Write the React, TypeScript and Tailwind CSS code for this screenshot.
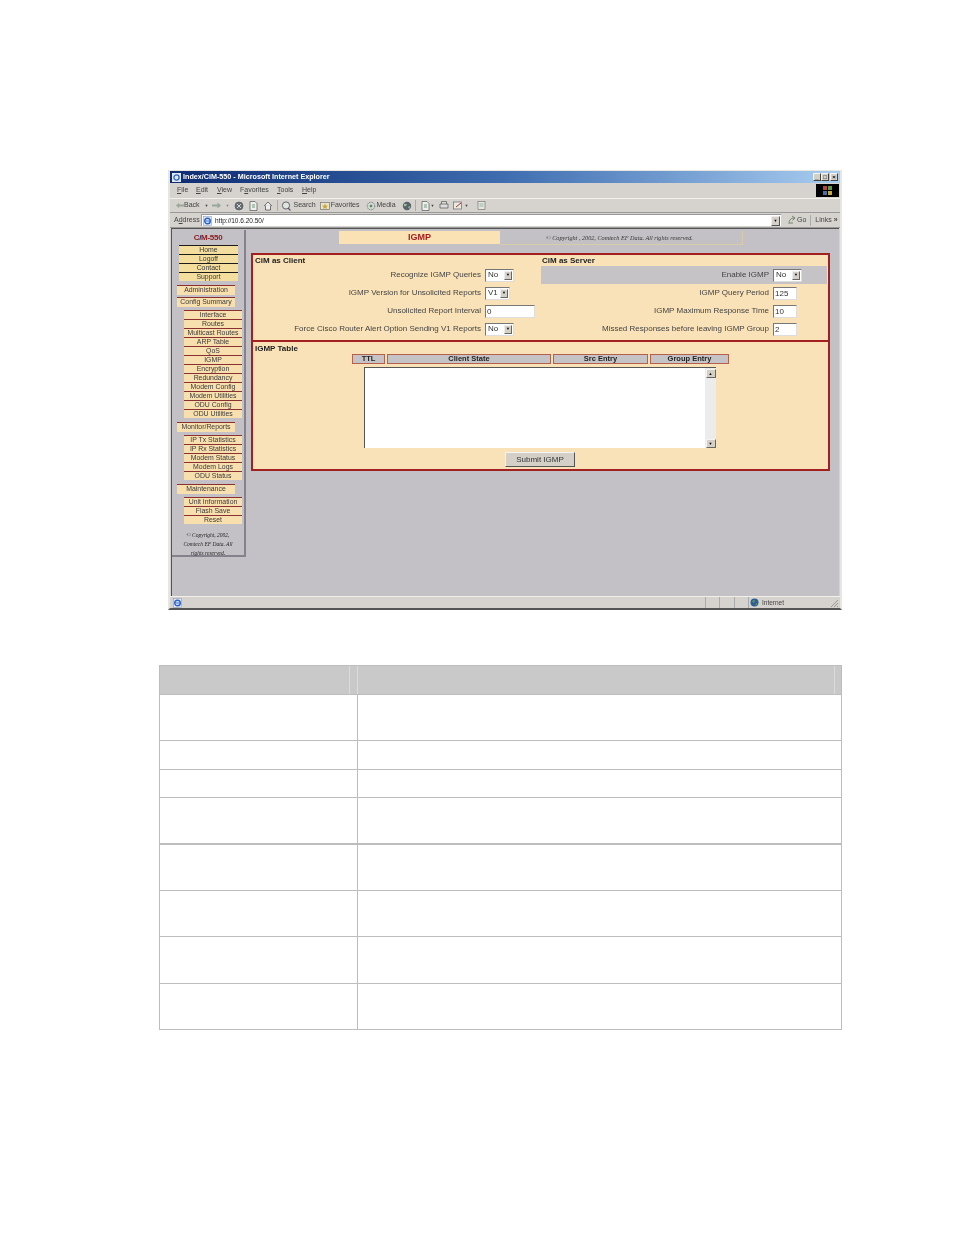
const font = { fontFamily: '"Liberation Sans", Arial, sans-serif' }

const primary = ['Home', 'Logoff', 'Contact', 'Support']
const config = ['Interface', 'Routes', 'Multicast Routes', 'ARP Table', 'QoS', 'IGMP', 'Encryption', 'Redundancy', 'Modem Config', 'Modem Utilities', 'ODU Config', 'ODU Utilities']
const monitor = ['IP Tx Statistics', 'IP Rx Statistics', 'Modem Status', 'Modem Logs', 'ODU Status']
const maintenance = ['Unit Information', 'Flash Save', 'Reset']

function NavLink({ label, dark, className = '' }: { label: string; dark?: boolean; className?: string }) {
  return (
    <div className={`h-[9px] border-t-[1px] text-center text-[6.9px] leading-[8px] text-[#3a3a3a] whitespace-nowrap overflow-hidden ${dark ? 'border-[#1c1c1c] bg-[#f4de9e]' : 'border-[#8a3030] bg-[#f8dfae]'} ${className}`}>
      {label}
    </div>
  )
}

function NavGroup({ items, mt }: { items: string[]; mt: string }) {
  return (
    <div className={`ml-[12px] w-[58px] ${mt}`}>
      {items.map(i => <NavLink key={i} label={i} />)}
    </div>
  )
}

function Sidebar() {
  return (
    <div className="w-[74px] h-[327px] shrink-0 mt-[1px] bg-[#c4c1c6] border-r-[2px] border-b-[2px] border-[#84828a] pt-[3px]">
      <div className="text-center text-[8px] leading-[10px] font-bold text-[#8c1a1a] tracking-[-0.3px]">C<span className="text-[#27277a]">/</span>M-550</div>
      <div className="ml-[7px] w-[59px] mt-[2px]">
        {primary.map(i => <NavLink key={i} label={i} dark />)}
      </div>
      <div className="ml-[5px] w-[58px] mt-[4px]"><NavLink label="Administration" className="h-[10px]" /></div>
      <div className="ml-[5px] w-[58px] mt-[2px]"><NavLink label="Config Summary" className="h-[10px]" /></div>
      <NavGroup items={config} mt="mt-[3px]" />
      <div className="ml-[5px] w-[58px] mt-[4px]"><NavLink label="Monitor/Reports" className="h-[10px]" /></div>
      <NavGroup items={monitor} mt="mt-[3px]" />
      <div className="ml-[5px] w-[58px] mt-[4px]"><NavLink label="Maintenance" className="h-[10px]" /></div>
      <NavGroup items={maintenance} mt="mt-[3px]" />
      <div className="mt-[7px] text-center italic text-[5.5px] leading-[9px] text-[#222] px-[5px]" style={{ fontFamily: '"Liberation Serif", serif' }}>
        © Copyright, 2002,<br />Comtech EF Data. All<br />rights reserved.
      </div>
    </div>
  )
}

function Select({ value, w }: { value: string; w: string }) {
  return (
    <div className={`${w} h-[13px] bg-white border border-[#777] border-r-[#ddd] border-b-[#ddd] flex items-center justify-between pl-[2px] pr-[1px] text-[8px] text-[#333]`}>
      <span>{value}</span>
      <span className="w-[8px] h-[9px] bg-[#d4d0c8] border border-[#eee] border-r-[#666] border-b-[#666] flex items-center justify-center text-[4px] leading-none text-black">▼</span>
    </div>
  )
}

function TextBox({ value, w }: { value: string; w: string }) {
  return (
    <div className={`${w} h-[13px] bg-white border border-[#777] border-r-[#ddd] border-b-[#ddd] pl-[1px] text-[8px] leading-[11px] text-[#333]`}>{value}</div>
  )
}

function Field({ label, children, gray }: { label: string; children: React.ReactNode; gray?: boolean }) {
  return (
    <div className={`h-[18px] flex items-center ${gray ? 'bg-[#c6c3c6]' : ''}`}>
      <div className="w-[228px] text-right text-[8px] text-[#444] whitespace-nowrap">{label}</div>
      <div className="ml-[4px]">{children}</div>
    </div>
  )
}

function TableHead({ label, w }: { label: string; w: string }) {
  return (
    <div className={`${w} h-[10px] bg-[#c6c3c6] border border-[#b5604c] text-center text-[7.5px] leading-[8px] font-bold text-[#222]`}>{label}</div>
  )
}

function Main() {
  return (
    <div className="flex-1 min-w-0">
      <div className="flex mt-[2px] ml-[93px] h-[14px]">
        <div className="w-[161px] h-[13px] bg-[#fbe2b4] text-center text-[9px] leading-[12px] font-bold text-[#a81c1c]">IGMP</div>
        <div className="w-[243px] h-[14px] border-r border-b border-[#d8cba8] pl-[46px] italic text-[6.2px] leading-[13px] text-[#333]" style={{ fontFamily: '"Liberation Serif", serif' }}>
          © Copyright , 2002, Comtech EF Data. All rights reserved.
        </div>
      </div>
      <div className="ml-[5px] mt-[8px] w-[579px] h-[218px] border-[2px] border-[#a32020] bg-[#f9e2b7]">
        <div className="h-[87px] border-b-[2px] border-[#a32020] flex">
          <div className="w-[288px] shrink-0">
            <div className="pl-[2px] h-[11px] text-[8px] leading-[11px] font-bold text-[#222]">CiM as Client</div>
            <Field label="Recognize IGMP Queries"><Select value="No" w="w-[29px]" /></Field>
            <Field label="IGMP Version for Unsolicited Reports"><Select value="V1" w="w-[25px]" /></Field>
            <Field label="Unsolicited Report Interval"><TextBox value="0" w="w-[50px]" /></Field>
            <Field label="Force Cisco Router Alert Option Sending V1 Reports"><Select value="No" w="w-[29px]" /></Field>
          </div>
          <div className="flex-1 pr-[1px]">
            <div className="pl-[1px] h-[11px] text-[8px] leading-[11px] font-bold text-[#222]">CiM as Server</div>
            <Field label="Enable IGMP" gray><Select value="No" w="w-[29px]" /></Field>
            <Field label="IGMP Query Period"><TextBox value="125" w="w-[24px]" /></Field>
            <Field label="IGMP Maximum Response Time"><TextBox value="10" w="w-[24px]" /></Field>
            <Field label="Missed Responses before leaving IGMP Group"><TextBox value="2" w="w-[24px]" /></Field>
          </div>
        </div>
        <div className="pl-[2px] pt-[1px] h-[12px] text-[8px] leading-[11px] font-bold text-[#222]">IGMP Table</div>
        <div className="flex gap-[2px] ml-[99px]">
          <TableHead label="TTL" w="w-[33px]" />
          <TableHead label="Client State" w="w-[164px]" />
          <TableHead label="Src Entry" w="w-[95px]" />
          <TableHead label="Group Entry" w="w-[79px]" />
        </div>
        <div className="ml-[111px] mt-[3px] w-[352px] h-[81px] bg-white border-l border-t border-[#555] flex justify-end">
          <div className="w-[11px] h-full bg-[#ececec] flex flex-col justify-between items-center pt-[1px]">
            <div className="w-[10px] h-[9px] bg-[#d4d0c8] border border-[#f4f4f4] border-r-[#666] border-b-[#666] text-[4px] leading-[7px] text-center text-black">▲</div>
            <div className="w-[10px] h-[9px] bg-[#d4d0c8] border border-[#f4f4f4] border-r-[#666] border-b-[#666] text-[4px] leading-[7px] text-center text-black">▼</div>
          </div>
        </div>
        <div className="ml-[252px] mt-[4px] w-[70px] h-[15px] bg-[#d4d0c8] border border-[#f4f4f4] border-r-[#555] border-b-[#555] text-center text-[8px] leading-[13px] text-[#333]">Submit IGMP</div>
      </div>
    </div>
  )
}

function Win({ children }: { children: React.ReactNode }) {
  return <span className="w-[8px] h-[8px] bg-[#d4d0c8] border border-[#f4f4f4] border-r-[#444] border-b-[#444] flex items-center justify-center text-[6px] leading-none text-black font-bold">{children}</span>
}

function Dot({ c, ml = 'ml-[8px]' }: { c: string; ml?: string }) {
  return (
    <svg width="10" height="10" viewBox="0 0 10 10" className={ml}>
      <circle cx="5" cy="5" r="4" fill={c} stroke="#555" strokeWidth="0.7" />
      <path d="M3 3 L7 7 M7 3 L3 7" stroke="#eee" strokeWidth="0.8" />
    </svg>
  )
}

function Page({ ml = 'ml-[5px]' }: { ml?: string }) {
  return (
    <svg width="9" height="10" viewBox="0 0 9 10" className={ml}>
      <path d="M1 .5 H6 L8 2.5 V9.5 H1 Z" fill="#eee" stroke="#555" strokeWidth="0.7" />
      <path d="M3 4 H6 M3 6 H6" stroke="#4a8a5a" strokeWidth="0.8" />
    </svg>
  )
}

function Toolbar() {
  return (
    <div className="h-[15px] flex items-center border-t border-[#f2f0ea] border-b border-b-[#999] text-[7px] text-[#444] pl-[6px] whitespace-nowrap">
      <svg width="8" height="7" viewBox="0 0 9 7"><path d="M0 3.5 L3.5 .5 V2.5 H9 V4.5 H3.5 V6.5 Z" fill="#9aa79a" /></svg>
      <span>Back</span>
      <span className="ml-[5px] text-[4px]">▼</span>
      <svg width="9" height="7" viewBox="0 0 9 7" className="ml-[3px]"><path d="M9 3.5 L5.5 .5 V2.5 H0 V4.5 H5.5 V6.5 Z" fill="#9aa79a" /></svg>
      <span className="ml-[5px] text-[4px] text-[#888]">▼</span>
      <Dot c="#66707a" ml="ml-[4px]" />
      <Page />
      <svg width="10" height="10" viewBox="0 0 10 10" className="ml-[5px]"><path d="M1 5 L5 1 L9 5 M2.5 4.5 V9 H7.5 V4.5" fill="#eee" stroke="#555" strokeWidth="0.8" /></svg>
      <span className="ml-[4px] w-px h-[11px] bg-[#aaa]" />
      <svg width="10" height="10" viewBox="0 0 10 10" className="ml-[3px]"><circle cx="5" cy="4.5" r="3.6" fill="#dfe6dc" stroke="#556" strokeWidth="0.9" /><path d="M7 7 L9.5 9.5" stroke="#556" strokeWidth="1.1" /></svg>
      <span className="ml-[3px]">Search</span>
      <svg width="10" height="9" viewBox="0 0 10 9" className="ml-[4px]"><rect x=".5" y="1.5" width="9" height="7" fill="#e9e3c8" stroke="#777" strokeWidth="0.7" /><path d="M5 2.5 L6 4.5 L8 4.7 L6.5 6 L7 8 L5 7 L3 8 L3.5 6 L2 4.7 L4 4.5 Z" fill="#c8a83a" /></svg>
      <span className="ml-[1px]">Favorites</span>
      <svg width="10" height="10" viewBox="0 0 10 10" className="ml-[7px]"><circle cx="5" cy="5" r="3.8" fill="#cfd5cf" stroke="#667" strokeWidth="0.9" strokeDasharray="1 0.7" /><circle cx="5" cy="5" r="1.3" fill="#5a8a5a" /></svg>
      <span>Media</span>
      <svg width="10" height="10" viewBox="0 0 10 10" className="ml-[6px]"><circle cx="5" cy="5" r="4.2" fill="#59636a" /><path d="M2 3 Q4 2 5 4 Q3 6 2 5 Z M6 6 L8 5 L7.5 8 Z" fill="#9fc59f" /></svg>
      <span className="ml-[3px] w-px h-[11px] bg-[#aaa]" />
      <Page ml="ml-[5px]" />
      <span className="ml-[1px] text-[4px]">▼</span>
      <svg width="10" height="9" viewBox="0 0 10 9" className="ml-[4px]"><path d="M2.5 3 V.5 H7.5 V3 M1 3 H9 V7 H1 Z" fill="#ddd" stroke="#555" strokeWidth="0.7" /></svg>
      <svg width="10" height="9" viewBox="0 0 10 9" className="ml-[4px]"><rect x=".5" y="1" width="8" height="7" fill="#e8ebe0" stroke="#667" strokeWidth="0.7" /><path d="M3 6 L8 2" stroke="#a33" strokeWidth="1" /></svg>
      <span className="ml-[2px] text-[4px]">▼</span>
      <svg width="9" height="9" viewBox="0 0 9 9" className="ml-[8px]"><rect x="1" y=".5" width="7" height="8" fill="#e6e6e0" stroke="#777" strokeWidth="0.7" /><path d="M2.5 3 H6.5 M2.5 5 H6.5" stroke="#6a8" strokeWidth="0.7" /></svg>
    </div>
  )
}

function IeGlyph({ size = 9 }: { size?: number }) {
  return (
    <svg width={size} height={size + 1} viewBox="0 0 9 10">
      <rect x=".5" y=".5" width="8" height="9" fill="#dfe9f7" stroke="#7f8ea8" strokeWidth="0.5" />
      <circle cx="4.5" cy="5" r="2.8" fill="none" stroke="#2a62c8" strokeWidth="1.4" />
      <path d="M2 5 H7" stroke="#2a62c8" strokeWidth="0.9" />
    </svg>
  )
}

function BrowserWindow() {
  return (
    <div className="ml-[168px] w-[674px] h-[440px] bg-[#d6d3ce] border-l-[2px] border-r-[2px] border-t border-[#e8e6e1] border-b-[2px] border-b-[#555] flex flex-col blur-[0.4px]">
      <div className="h-[12px] flex items-center pl-[2px] pr-[1px] bg-gradient-to-r from-[#0f2c72] via-[#3f6db0] to-[#a9cdf0]">
        <svg width="9" height="9" viewBox="0 0 9 9"><rect width="9" height="9" fill="#dfe9f7" /><circle cx="4.5" cy="4.5" r="2.6" fill="none" stroke="#2a62c8" strokeWidth="1.3" /></svg>
        <span className="ml-[2px] text-[7.2px] font-bold text-white">Index/CiM-550 - Microsoft Internet Explorer</span>
        <div className="ml-auto flex gap-0 mr-[1px]">
          <Win>_</Win>
          <Win>□</Win>
          <span className="ml-[1px]"><Win>×</Win></span>
        </div>
      </div>
      <div className="h-[15px] flex items-center pl-[7px] text-[7px] text-[#444]">
        <span className="w-[19px]"><u>F</u>ile</span>
        <span className="w-[21px]"><u>E</u>dit</span>
        <span className="w-[23px]"><u>V</u>iew</span>
        <span className="w-[37px]">F<u>a</u>vorites</span>
        <span className="w-[25px]"><u>T</u>ools</span>
        <span><u>H</u>elp</span>
        <div className="ml-auto mr-[1px] w-[23px] h-[13px] bg-black flex items-center justify-center">
          <svg width="9" height="9" viewBox="0 0 9 9"><rect width="4" height="4" fill="#b8453a" /><rect x="5" width="4" height="4" fill="#5d9a4a" /><rect y="5" width="4" height="4" fill="#4a6db0" /><rect x="5" y="5" width="4" height="4" fill="#c8a83a" /></svg>
        </div>
      </div>
      <Toolbar />
      <div className="h-[15px] flex items-center pl-[4px] text-[7px] text-[#444] border-b border-[#999]">
        <span className="w-[27px]">A<u>d</u>dress</span>
        <div className="w-[580px] h-[12px] bg-white border-t border-l border-[#999] flex items-center pl-[1px] pr-[1px] text-[6.5px] text-[#222]">
          <IeGlyph />
          <span className="ml-[3px]">http://10.6.20.50/</span>
          <span className="ml-auto w-[9px] h-[10px] bg-[#d4d0c8] border border-[#eee] border-r-[#555] border-b-[#555] flex items-center justify-center text-[4px] text-black">▼</span>
        </div>
        <svg width="9" height="10" viewBox="0 0 9 10" className="ml-[7px]"><path d="M1 9 Q1 3 6 3 M4 1 L7 3 L4.5 5.5 M2 8 L5 8" fill="none" stroke="#668066" strokeWidth="0.9" /></svg>
        <span>Go</span>
        <span className="ml-[4px] w-px h-[11px] bg-[#aaa]" />
        <span className="ml-[4px]">Links</span>
        <span className="ml-[2px] font-bold">»</span>
      </div>
      <div className="h-[368px] mx-[1px] flex bg-[#c4c1c6] border-l border-t border-[#555] border-r-[#eee]">
        <Sidebar />
        <Main />
      </div>
      <div className="flex-1 flex items-center pl-[3px] text-[6.5px] text-[#444] border-t border-[#f2f0ea]">
        <IeGlyph />
        <span className="ml-[523px] w-[15px] h-[11px] border-l border-r border-[#aaa]" />
        <span className="w-[15px] h-[11px] border-r border-[#aaa]" />
        <span className="w-[14px] h-[11px] border-r border-[#aaa]" />
        <svg width="9" height="9" viewBox="0 0 9 9" className="ml-[1px]"><circle cx="4.5" cy="4.5" r="4" fill="#2c5d9a" /><path d="M2 3 L5 2 L4 5 Z M6 5 L7.5 6 L5.5 8 Z" fill="#66a34f" /></svg>
        <span className="ml-[3px]">Internet</span>
        <svg width="10" height="10" viewBox="0 0 10 10" className="ml-auto mr-[1px]"><path d="M9 2 L2 9 M9 5 L5 9 M9 8 L8 9" stroke="#999" strokeWidth="1" /></svg>
      </div>
    </div>
  )
}

const rows = [
  'h-[46px]', 'h-[29px]', 'h-[28px]', 'h-[47px] border-b-[2px]', 'h-[46px]', 'h-[46px]', 'h-[47px]', 'h-[46px]',
]

function SpecTable() {
  return (
    <div className="ml-[159px] mt-[55px] w-[683px] border-l border-r border-t border-[#bdbdbd]">
      <div className="h-[29px] bg-[#c9c9c9] flex border-b border-[#bdbdbd]">
        <div className="w-[190px] border-r border-[#dcdcdc]" />
        <div className="w-[8px] border-r border-[#dcdcdc]" />
        <div className="w-[477px] border-r border-[#dcdcdc]" />
      </div>
      {rows.map((r, i) => (
        <div key={i} className={`flex border-b border-[#bdbdbd] ${r}`}>
          <div className="w-[198px] border-r border-[#bdbdbd]" />
          <div className="flex-1" />
        </div>
      ))}
    </div>
  )
}

export default function App() {
  return (
    <div className="w-[954px] h-[1235px] bg-white pt-[170px] overflow-hidden" style={font}>
      <BrowserWindow />
      <SpecTable />
    </div>
  )
}
